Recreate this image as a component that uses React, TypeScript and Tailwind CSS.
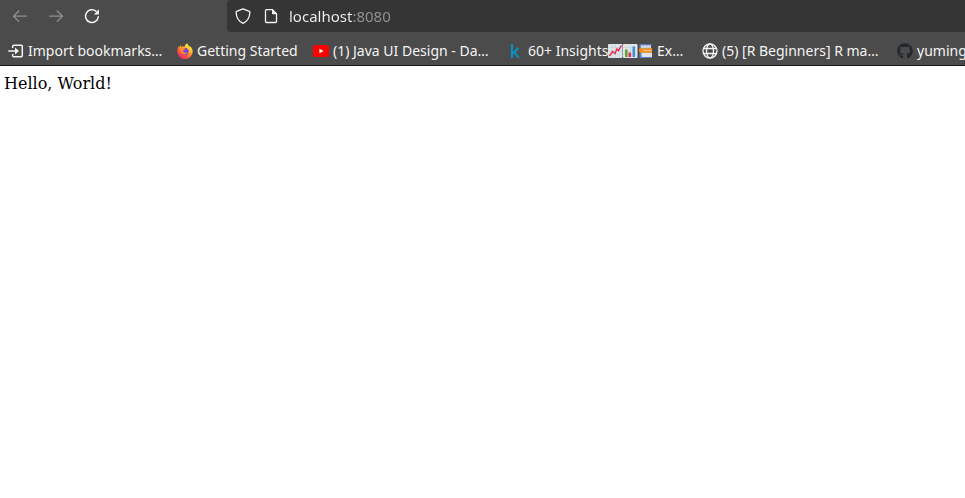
import type { ReactNode } from "react";
import { FaGithub } from "react-icons/fa";

function BackIcon() {
  return (
    <svg width="16" height="16" viewBox="0 0 16 16" fill="none" stroke="currentColor" strokeWidth="1.3" strokeLinecap="round" strokeLinejoin="round" aria-hidden="true">
      <path d="M14.5 8.2H1.6M6.8 3 1.5 8.2 6.8 13.4" />
    </svg>
  );
}

function ForwardIcon() {
  return (
    <svg width="16" height="16" viewBox="0 0 16 16" fill="none" stroke="currentColor" strokeWidth="1.3" strokeLinecap="round" strokeLinejoin="round" aria-hidden="true">
      <path d="M1.5 8.2H14.4M9.2 3 14.5 8.2 9.2 13.4" />
    </svg>
  );
}

function ReloadIcon() {
  return (
    <svg width="16" height="16" viewBox="0 0 16 16" fill="none" aria-hidden="true">
      <path d="M14.3 8.7A6.4 6.4 0 1 1 12 3.2" stroke="currentColor" strokeWidth="1.5" strokeLinecap="round" />
      <path d="M15 1.3v4.5a.6.6 0 0 1-.6.6H9.9z" fill="currentColor" />
    </svg>
  );
}

function ShieldIcon() {
  return (
    <svg width="16" height="16" viewBox="0 0 16 16" fill="none" stroke="currentColor" strokeWidth="1.3" strokeLinejoin="round" aria-hidden="true">
      <path d="M8 .8 14.4 3.4a.8.8 0 0 1 .5.8C14.7 8.7 12.8 13.2 8 15.3 3.2 13.2 1.3 8.7 1.1 4.2a.8.8 0 0 1 .5-.8z" />
    </svg>
  );
}

function PageIcon() {
  return (
    <svg width="16" height="16" viewBox="0 0 16 16" fill="none" aria-hidden="true">
      <path d="M3.5 1.7h6l4 4v7.8a1 1 0 0 1-1 1h-9a1 1 0 0 1-1-1V2.7a1 1 0 0 1 1-1z" stroke="currentColor" strokeWidth="1.3" />
      <path d="M9 1.5V5.5a.8.8 0 0 0 .8.8h4z" fill="currentColor" />
    </svg>
  );
}

function ImportIcon() {
  return (
    <svg width="16" height="16" viewBox="0 0 16 16" fill="none" aria-hidden="true">
      <path d="M4.7 5V3.2a1 1 0 0 1 1-1h7.6a1 1 0 0 1 1 1v9.6a1 1 0 0 1-1 1H5.7a1 1 0 0 1-1-1V11" stroke="currentColor" strokeWidth="1.5" />
      <path d="M.8 8h7" stroke="currentColor" strokeWidth="1.5" strokeLinecap="round" />
      <path d="M7 4.6 11 8l-4 3.4z" fill="currentColor" />
    </svg>
  );
}

function FirefoxIcon() {
  return (
    <svg width="16" height="16" viewBox="0 0 16 16" aria-hidden="true">
      <defs>
        <linearGradient id="fox-body" x1="0.85" y1="0.05" x2="0.2" y2="1">
          <stop offset="0" stopColor="#fff44f" />
          <stop offset="0.35" stopColor="#ffb52c" />
          <stop offset="0.65" stopColor="#ff5b36" />
          <stop offset="1" stopColor="#e5177f" />
        </linearGradient>
      </defs>
      <path d="M10.3.3c.5 1.7 1.7 2.5 2.7 3.7l.2-.7c1.5 1.5 2.5 3.3 2.5 5.2a7.7 7.7 0 0 1-15.4 0C.3 6.2 1 4.2 2 3l.3 1.3L3.800 2l.8 2c1-.5 1.900-.5 2.800-.1C7.800 2.300 8.800 1.100 10.300.3z" fill="url(#fox-body)" />
      <circle cx="8.1" cy="8.6" r="3.7" fill="#7b3fe4" />
      <path d="M3.3 5.2c1.500-.8 3.400-.4 4.900.9-.2.9-1.300 1-2 1.400-.2 1.200.4 2.200 1.800 2.200 1 0 1.700-.6 2.600-.4-.7 1.700-2.200 2.400-3.800 2.100-2.200-.4-3.700-2.700-3.500-6.200z" fill="#ff8b25" />
      <path d="M10.200 5.200c2.100 1.200 2.400 4.100.8 5.700 2.500-.9 3.200-4.100 1.300-6.200z" fill="#ffc52e" />
    </svg>
  );
}

function YoutubeIcon() {
  return (
    <svg width="16" height="16" viewBox="0 0 16 16" aria-hidden="true">
      <rect x="0" y="2" width="16" height="12" rx="2.5" fill="#f00" />
      <path d="M6.4 5.700v4.600L10.500 8z" fill="#fff" />
    </svg>
  );
}

function KaggleIcon() {
  return (
    <svg width="16" height="16" viewBox="0 0 16 16" fill="none" stroke="#0a8fc4" strokeWidth="2.2" aria-hidden="true">
      <path d="M4 1v14M10.300 4.800 5 10.400M6.300 8.800l4.300 6" />
    </svg>
  );
}

function GlobeIcon() {
  return (
    <svg width="16" height="16" viewBox="0 0 16 16" fill="none" stroke="currentColor" strokeWidth="1.3" aria-hidden="true">
      <circle cx="8" cy="8" r="7" />
      <ellipse cx="8" cy="8" rx="3.5" ry="7" />
      <path d="M1.500 5.500h13M1.500 10.500h13" />
    </svg>
  );
}

function LineChartGlyph() {
  return (
    <svg width="15" height="16" viewBox="0 0 15 16" aria-hidden="true">
      <rect x="0" y="1" width="14.5" height="14" rx="1" fill="#dfe7eb" />
      <path d="M4 1v14M7.500 1v14M11 1v14M0 4.500h14.500M0 8h14.500M0 11.500h14.500" stroke="#c3d0d7" strokeWidth="0.6" />
      <path d="M1.500 13 4.500 8.500 7 10.500 9 6l1.500 1.500L13.500 2.500" fill="none" stroke="#e6284a" strokeWidth="1.4" />
    </svg>
  );
}

function BarChartGlyph() {
  return (
    <svg width="15" height="16" viewBox="0 0 15 16" aria-hidden="true">
      <rect x="0" y="1" width="14.5" height="14" rx="1" fill="#dfe7eb" />
      <path d="M4 1v14M7.500 1v14M11 1v14M0 4.500h14.500M0 8h14.500M0 11.500h14.500" stroke="#c3d0d7" strokeWidth="0.6" />
      <path d="M2 6.500h2.600V14H2z" fill="#6b9f3a" />
      <path d="M5.500 9.500h2.600V14H5.500z" fill="#e6284a" />
      <path d="M9.500 3.500h2.600V14H9.500z" fill="#3f8fdc" />
    </svg>
  );
}

function BooksGlyph() {
  return (
    <svg width="15" height="16" viewBox="0 0 15 16" aria-hidden="true">
      <path d="M2 1.500h11v4H2z" fill="#cdd3e2" />
      <path d="M1.500 1h12v1.200h-12zM1.500 1h1.300v4.500H1.500z" fill="#6676b8" />
      <path d="M2 9.500h12v5H2z" fill="#dfe3ea" />
      <path d="M1.500 9.500h2V15h-2zM1.500 14h12.500v1H1.500z" fill="#5681c8" />
      <path d="M2.500 5.500H14v4H2.500z" fill="#f8bb72" />
      <path d="M1 5.500h13v1.200H5v1.600h9v1.200H2.500A1.500 1.500 0 0 1 1 8z" fill="#f28a12" />
    </svg>
  );
}

type BookmarkProps = { icon: ReactNode; width: string; children: ReactNode };

function Bookmark({ icon, width, children }: BookmarkProps) {
  return (
    <li className={`flex-none ${width}`}>
      <a href="#" className="flex h-8 items-center gap-1 whitespace-nowrap">
        <span className="flex-none">{icon}</span>
        <span className="flex items-center whitespace-pre">{children}</span>
      </a>
    </li>
  );
}

export default function App() {
  return (
    <div className="min-h-screen bg-white">
      <header className="overflow-hidden border-b border-[#18171a] bg-[#4b4b4b] font-['Noto_Sans','Open_Sans',sans-serif] text-sm text-[#f4f4f4]">
        <div className="flex h-8 items-center">
          <nav aria-label="History" className="flex w-[227px] flex-none gap-5 pl-3">
            <button type="button" aria-label="Back" disabled className="text-[#8f8f8f]"><BackIcon /></button>
            <button type="button" aria-label="Forward" disabled className="text-[#8f8f8f]"><ForwardIcon /></button>
            <button type="button" aria-label="Reload"><ReloadIcon /></button>
          </nav>
          <div className="flex h-8 flex-1 items-center rounded-l bg-[#353535] pl-2">
            <button type="button" aria-label="Tracking protection" className="mr-3"><ShieldIcon /></button>
            <button type="button" aria-label="Site information" className="mr-2.5"><PageIcon /></button>
            <input
              type="text"
              aria-label="Address"
              defaultValue="localhost:8080"
              className="min-w-0 flex-1 bg-[linear-gradient(to_right,#f4f4f4_63px,#949494_63px)] bg-clip-text pt-0.5 text-[15px] text-transparent outline-none"
            />
          </div>
        </div>
        <ul className="flex h-[33px] items-center pl-2 pt-[5px]">
          <Bookmark icon={<ImportIcon />} width="w-[169px]">Import bookmarks…</Bookmark>
          <Bookmark icon={<FirefoxIcon />} width="w-[136px]">Getting Started</Bookmark>
          <Bookmark icon={<YoutubeIcon />} width="w-[195px]">(1) Java UI Design - Da…</Bookmark>
          <Bookmark icon={<KaggleIcon />} width="w-[194px]">
            60+ Insights<LineChartGlyph /><BarChartGlyph /><BooksGlyph />{" Ex…"}
          </Bookmark>
          <Bookmark icon={<GlobeIcon />} width="w-[195px]">(5) [R Beginners] R ma…</Bookmark>
          <Bookmark icon={<FaGithub size={16} color="#24292e" />} width="w-[195px]">yuming</Bookmark>
        </ul>
      </header>
      <main className="px-1 py-1.5 font-['DejaVu_Serif',serif] text-base text-black">Hello, World!</main>
    </div>
  );
}
